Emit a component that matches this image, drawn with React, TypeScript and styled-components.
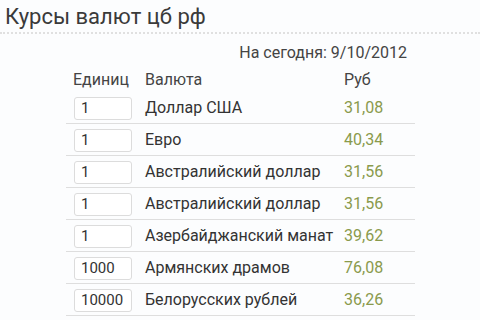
import React from "react";
import styled, { createGlobalStyle } from "styled-components";

const Global = createGlobalStyle`
  html, body { margin: 0; padding: 0; background: #fcfdfe; }
  body { font-family: Roboto, "Noto Sans", sans-serif; color: #333; width: 480px; height: 320px; overflow: hidden; }
`;

const Page = styled.div`
  width: 480px;
  height: 320px;
  overflow: hidden;
  display: flex;
  flex-direction: column;
`;

const TitleBar = styled.div`
  height: 32px;
  flex-shrink: 0;
  display: flex;
  align-items: center;
  padding-left: 5px;
  font-size: 22px;
  color: #3a3a3a;
  border-bottom: 2px dotted #e0e0e0;
  box-sizing: content-box;
`;

const DateLine = styled.div`
  height: 35px;
  flex-shrink: 0;
  display: flex;
  align-items: center;
  justify-content: flex-end;
  padding-right: 73px;
  padding-top: 2px;
  box-sizing: border-box;
  font-size: 16px;
  color: #444;
`;

const Table = styled.div`
  margin-left: 66px;
  width: 349px;
  display: flex;
  flex-direction: column;
`;

const HeadRow = styled.div`
  display: grid;
  grid-template-columns: 79px 199px 1fr;
  height: 21px;
  align-items: center;
  font-size: 16px;
  color: #444;
  padding-bottom: 2px;
`;

const HeadCell = styled.div<{ $indent?: number }>`
  padding-left: ${(p) => p.$indent ?? 0}px;
`;

const Row = styled.div`
  display: grid;
  grid-template-columns: 79px 199px 1fr;
  height: 32px;
  flex-shrink: 0;
  align-items: center;
  border-bottom: 1px solid #dedede;
  box-sizing: border-box;
  font-size: 16px;
`;

const UnitBox = styled.div`
  margin-left: 8px;
  width: 58px;
  height: 23px;
  box-sizing: border-box;
  border: 1px solid #dcdcdc;
  border-radius: 3px;
  background: #fff;
  display: flex;
  align-items: center;
  padding-left: 6px;
  font-size: 15px;
  color: #333;
  margin-top: 1px;
`;

const Name = styled.div`
  color: #333;
`;

const Value = styled.div`
  color: #8a9a4c;
`;

const rows = [
  ["1", "Доллар США", "31,08"],
  ["1", "Евро", "40,34"],
  ["1", "Австралийский доллар", "31,56"],
  ["1", "Австралийский доллар", "31,56"],
  ["1", "Азербайджанский манат", "39,62"],
  ["1000", "Армянских драмов", "76,08"],
  ["10000", "Белорусских рублей", "36,26"],
  ["", "", ""],
];

export default function App() {
  return (
    <Page>
      <Global />
      <TitleBar>Курсы валют цб рф</TitleBar>
      <DateLine>На сегодня: 9/10/2012</DateLine>
      <Table>
        <HeadRow>
          <HeadCell $indent={7}>Единиц</HeadCell>
          <HeadCell>Валюта</HeadCell>
          <HeadCell>Руб</HeadCell>
        </HeadRow>
        {rows.map((r, i) => (
          <Row key={i}>
            <UnitBox>{r[0]}</UnitBox>
            <Name>{r[1]}</Name>
            <Value>{r[2]}</Value>
          </Row>
        ))}
      </Table>
    </Page>
  );
}
